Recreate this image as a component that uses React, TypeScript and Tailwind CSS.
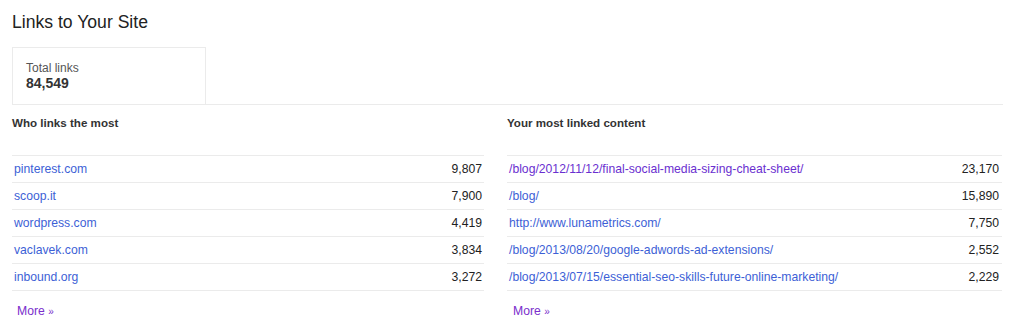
import React from "react";

const left: [string, string, boolean][] = [
  ["pinterest.com", "9,807", false],
  ["scoop.it", "7,900", false],
  ["wordpress.com", "4,419", false],
  ["vaclavek.com", "3,834", false],
  ["inbound.org", "3,272", false],
];

const right: [string, string, boolean][] = [
  ["/blog/2012/11/12/final-social-media-sizing-cheat-sheet/", "23,170", true],
  ["/blog/", "15,890", false],
  ["http://www.lunametrics.com/", "7,750", false],
  ["/blog/2013/08/20/google-adwords-ad-extensions/", "2,552", false],
  ["/blog/2013/07/15/essential-seo-skills-future-online-marketing/", "2,229", false],
];

function Table({
  title,
  rows,
  width,
  padL,
  padR,
  moreL,
}: {
  title: string;
  rows: [string, string, boolean][];
  width: string;
  padL: string;
  padR: string;
  moreL: string;
}) {
  return (
    <div className={width}>
      <div className="h-[50px] pt-[11px] text-[11.6px] leading-[14px] font-bold text-[#333]">{title}</div>
      <div className="border-t border-[#ebebeb]">
        {rows.map(([name, count, visited]) => (
          <div
            key={name}
            className={`flex h-[27px] items-center justify-between border-b border-[#ebebeb] text-[12.2px] leading-[14px] ${padL} ${padR}`}
          >
            <a className={visited ? "text-[#6a2fd0]" : "text-[#3d5fd6]"}>{name}</a>
            <span className="text-[#222]">{count}</span>
          </div>
        ))}
      </div>
      <div className={`mt-[13px] text-[12.2px] leading-[14px] text-[#7b2fcc] ${moreL}`}>
        More <span className="text-[10px]">»</span>
      </div>
    </div>
  );
}

export default function App() {
  return (
    <div className="w-[1024px] h-[331px] bg-white pl-3 font-['Liberation_Sans',Arial,sans-serif]">
      <div className="w-[991px]">
        <h1 className="pt-[12px] text-[17.6px] leading-[20px] font-normal text-[#222]">Links to Your Site</h1>
        <div className="mt-[15px] border-b border-[#ebebeb]">
          <div className="h-[57px] w-[194px] border border-b-0 border-[#ebebeb] pl-[13px] pt-[13px]">
            <div className="text-[12px] leading-[14px] text-[#555]">Total links</div>
            <div className="text-[14px] leading-[16px] font-bold text-[#333]">84,549</div>
          </div>
        </div>
        <div className="flex gap-[23px]">
          <Table title="Who links the most" rows={left} width="w-[472px]" padL="pl-[2px]" padR="pr-[2px]" moreL="pl-[5px]" />
          <Table title="Your most linked content" rows={right} width="w-[495px]" padL="pl-[2px]" padR="pr-[3px]" moreL="pl-[6px]" />
        </div>
      </div>
    </div>
  );
}
